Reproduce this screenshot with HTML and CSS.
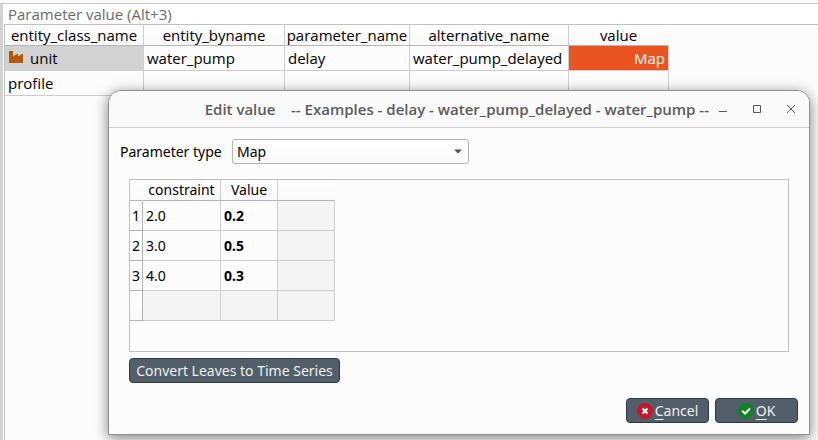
FILE: index.html
```html
<!DOCTYPE html>
<html lang="en">
<head>
<meta charset="utf-8">
<title>Parameter value</title>
<link rel="stylesheet" href="styles.css">
</head>
<body>
<main class="dock">
  <h1 class="dock-title">Parameter value (Alt+3)</h1>
  <div class="dock-body">
    <table class="grid params">
      <colgroup><col class="c-class"><col class="c-byname"><col class="c-param"><col class="c-alt"><col class="c-value"></colgroup>
      <thead>
        <tr><th>entity_class_name</th><th>entity_byname</th><th>parameter_name</th><th>alternative_name</th><th>value</th></tr>
      </thead>
      <tbody>
        <tr>
          <td class="current"><span class="entity"><svg class="factory" viewBox="0 0 16 16" aria-hidden="true"><path d="M1 1.600Q1 1 1.600 1H4.400Q5 1 5 1.600V6.500L9 4Q10 3.500 10 4.500V6.500L14 4Q15 3.500 15 4.500V12.400Q15 13 14.400 13H1.600Q1 13 1 12.400Z"/></svg>unit</span></td>
          <td>water_pump</td><td>delay</td><td>water_pump_delayed</td><td class="selected">Map</td>
        </tr>
        <tr><td>profile</td><td></td><td></td><td></td><td></td></tr>
      </tbody>
    </table>
  </div>
</main>

<section class="dialog" role="dialog" aria-labelledby="dialog-title">
  <header class="titlebar">
    <h2 id="dialog-title">Edit value    -- Examples - delay - water_pump_delayed - water_pump --</h2>
    <div class="window-controls">
      <button type="button" aria-label="Minimize"><svg viewBox="0 0 10 10"><path d="M1 7.500H9"/></svg></button>
      <button type="button" aria-label="Maximize"><svg viewBox="0 0 10 10"><path d="M1.500 1.500H8.500V8.500H1.500Z"/></svg></button>
      <button type="button" aria-label="Close"><svg viewBox="0 0 10 10"><path d="M1 1L9 9M9 1L1 9"/></svg></button>
    </div>
  </header>
  <form class="content">
    <div class="field">
      <label for="ptype">Parameter type</label>
      <span class="combo">
        <select id="ptype"><option>Map</option></select>
        <svg viewBox="0 0 8 5" aria-hidden="true"><path d="M0 .5H8L4 4.500Z"/></svg>
      </span>
    </div>
    <div class="map-editor">
      <div class="table-frame">
        <table class="grid values">
          <colgroup><col class="v-row"><col class="v-index"><col class="v-value"><col class="v-extra"></colgroup>
          <thead><tr><th class="corner"></th><th>constraint</th><th>Value</th><th></th></tr></thead>
          <tbody>
            <tr><th>1</th><td>2.0</td><td class="leaf">0.2</td><td class="empty"></td></tr>
            <tr><th>2</th><td>3.0</td><td class="leaf">0.5</td><td class="empty"></td></tr>
            <tr><th>3</th><td>4.0</td><td class="leaf">0.3</td><td class="empty"></td></tr>
            <tr><th></th><td class="empty"></td><td class="empty"></td><td class="empty"></td></tr>
          </tbody>
        </table>
      </div>
      <button type="button" class="btn convert">Convert Leaves to Time Series</button>
    </div>
    <div class="actions">
      <button type="button" class="btn"><svg viewBox="0 0 16 16" aria-hidden="true"><circle cx="8" cy="8" r="8" fill="#c7162b"/><path class="mark" d="M5.500 5.500L10.500 10.500M10.500 5.500L5.500 10.500"/></svg><span><u>C</u>ancel</span></button>
      <button type="button" class="btn"><svg viewBox="0 0 16 16" aria-hidden="true"><circle cx="8" cy="8" r="8" fill="#0e8420"/><path class="mark" d="M4 7.800L7 10.500L12 5.500"/></svg><span><u>O</u>K</span></button>
    </div>
  </form>
</section>
</body>
</html>
```
FILE: styles.css
```css
* { box-sizing: border-box; }

body {
  margin: 0;
  min-height: 100vh;
  padding-top: 3px;
  display: flex;
  background: #fafafa;
  color: #000;
  font: 15px/20px "Open Sans", "Noto Sans", sans-serif;
  overflow: hidden;
}

button, select { font: inherit; }

.dock {
  flex: 1;
  display: flex;
  flex-direction: column;
  border-top: 1px solid #c4c4c4;
  border-left: 3px solid #d2d2d2;
  background: #fff;
}

.dock-title {
  margin: 0;
  padding-left: 5px;
  color: #6a6a6a;
  font-size: 15px;
  font-weight: 400;
}

.dock-body {
  flex: 1;
  margin-left: 1px;
  border: solid #c0c0c0;
  border-width: 1px 0 0 1px;
  background: #fcfcfc;
}

.grid {
  border-collapse: separate;
  border-spacing: 0;
  table-layout: fixed;
}

.grid th, .grid td {
  padding: 0 3px;
  border: solid #cdcdcd;
  border-width: 0 1px 1px 0;
  white-space: nowrap;
}

.grid th {
  padding: 0;
  background: linear-gradient(#fff, #f9f9f9);
  font-weight: 400;
}

.grid thead th { height: 21px; border-bottom-color: #b4b4b4; }
.grid thead th:last-child { border-right-color: transparent; }

.params { width: 664px; }
.params td { height: 25px; }
.c-class { width: 139px; }
.c-byname { width: 141px; }
.c-param { width: 125px; }
.c-alt { width: 159px; }
.c-value { width: 100px; }

.grid .current { background: #d2d2d2; }
.grid .selected { background: #e95420; color: #fff; text-align: right; }

.entity { display: flex; align-items: center; gap: 6px; }
.factory { width: 16px; height: 16px; fill: #b35900; }

.dialog {
  position: absolute;
  top: 90px;
  left: 108px;
  right: 8px;
  border: 1px solid #8f8f8f;
  border-radius: 13px 13px 0 0;
  background: #fcfcfc;
  box-shadow: 0 3px 14px rgba(0, 0, 0, .5);
}

.titlebar {
  display: flex;
  align-items: center;
  justify-content: flex-end;
  height: 37px;
  padding-right: 13px;
  border-bottom: 1px solid #cfcfcf;
  border-radius: 12px 12px 0 0;
  background: #fafafa;
}

.titlebar h2 {
  margin: 0;
  color: #5c5c5c;
  font-size: 15px;
  font-weight: 600;
  white-space: pre;
}

.window-controls { display: flex; gap: 24px; padding-left: 9px; }

.window-controls button {
  width: 10px;
  height: 10px;
  padding: 0;
  border: 0;
  background: none;
}

.window-controls svg {
  display: block;
  width: 10px;
  height: 10px;
  fill: none;
  stroke: #555;
}

.content {
  padding: 11px;
  font: 14px/20px "Noto Sans", "Open Sans", sans-serif;
}

.field { display: flex; align-items: center; gap: 6px; }
.field label { width: 106px; white-space: nowrap; }

.combo { display: flex; align-items: center; }

.combo select {
  appearance: none;
  width: 237px;
  height: 25px;
  padding: 0 4px;
  border: 1px solid #b4b4b4;
  border-radius: 3px;
  background: linear-gradient(#fff, #f9f9f9);
  color: #000;
}

.combo svg { width: 8px; height: 5px; margin-left: -15px; fill: #555; }

.map-editor { padding: 15px 9px; }

.table-frame {
  height: 173px;
  margin-bottom: 6px;
  border: 1px solid #c0c0c0;
}

.values { width: 205px; }
.values tbody tr { height: 30px; }
.values tbody th { border-color: #b4b4b4; }
.grid thead .corner { border-right-color: transparent; }
.v-row { width: 13px; }
.v-index { width: 78px; }
.v-value, .v-extra { width: 57px; }
.leaf { font-weight: 700; }
.empty { background: #f4f4f4; }

.btn {
  display: flex;
  align-items: center;
  justify-content: center;
  gap: 2px;
  width: 83px;
  height: 25px;
  padding: 0;
  border: 1px solid #2b3942;
  border-radius: 4px;
  background: #525f6a;
  color: #eee;
  white-space: nowrap;
}

.btn svg { width: 16px; height: 16px; }
.mark { fill: none; stroke: #fff; stroke-width: 2; }

.btn u { text-underline-offset: 3px; }
.convert { width: 211px; }
.actions { display: flex; justify-content: flex-end; gap: 6px; }
```
